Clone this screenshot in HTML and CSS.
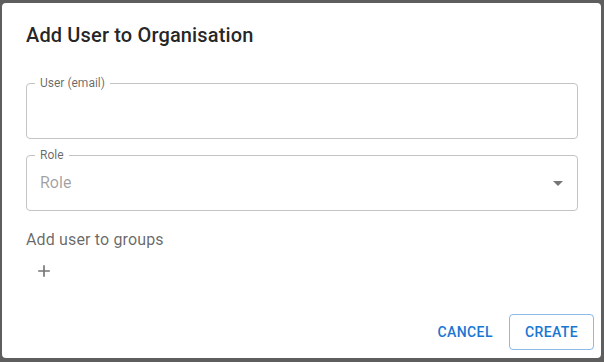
FILE: index.html
```html
<!DOCTYPE html>
<html lang="en">
<head>
  <meta charset="UTF-8">
  <title>Add User to Organisation</title>
  <link rel="stylesheet" href="styles.css">
</head>
<body>
  <div class="dialog">
    <h2 class="dialog-title">Add User to Organisation</h2>
    <div class="dialog-content">
      <div class="field">
        <span class="field-label">User (email)</span>
        <input class="field-input" type="text">
      </div>
      <div class="field select">
        <span class="field-label">Role</span>
        <span class="placeholder">Role</span>
        <svg class="arrow" viewBox="0 0 24 24" width="24" height="24"><path d="M7 10l5 5 5-5z"/></svg>
      </div>
      <p class="groups-label">Add user to groups</p>
      <button class="icon-button" aria-label="add group">
        <svg viewBox="0 0 24 24" width="20" height="20"><path d="M19 13h-6v6h-2v-6H5v-2h6V5h2v6h6v2z"/></svg>
      </button>
    </div>
    <div class="dialog-actions">
      <button class="btn text">Cancel</button>
      <button class="btn outlined">Create</button>
    </div>
  </div>
</body>
</html>
```
FILE: styles.css
```css
body {
  margin: 0;
  height: 362px;
  box-sizing: border-box;
  padding: 3px 3px 4px 2px;
  background-color: #5e5e5e;
  font-family: "Roboto", "Liberation Sans", sans-serif;
}

.dialog {
  height: 355px;
  background-color: #fff;
  border-radius: 4px;
  display: flex;
  flex-direction: column;
}

.dialog-title {
  margin: 0;
  padding: 16px 24px;
  font-size: 20px;
  line-height: 32px;
  font-weight: 500;
  letter-spacing: 0.15px;
  color: rgba(0, 0, 0, 0.87);
}

.dialog-content {
  padding: 0 23px 0 24px;
  display: flex;
  flex-direction: column;
}

.field {
  position: relative;
  height: 56px;
  margin-top: 16px;
  box-sizing: border-box;
  border: 1px solid #c4c4c4;
  border-radius: 4px;
  display: flex;
  align-items: center;
}

.field.select {
  margin-top: 16px;
}

.field-label {
  position: absolute;
  top: -8px;
  left: 8px;
  padding: 0 5px;
  background-color: #fff;
  font-size: 12px;
  line-height: 14px;
  color: rgba(0, 0, 0, 0.6);
}

.field-input {
  flex: 1;
  height: 100%;
  border: none;
  outline: none;
  background: transparent;
  padding: 0 14px;
  font: inherit;
  font-size: 16px;
}

.placeholder {
  flex: 1;
  padding-left: 13px;
  padding-bottom: 1px;
  font-size: 16px;
  color: rgba(0, 0, 0, 0.38);
}

.arrow {
  margin-right: 7px;
  fill: rgba(0, 0, 0, 0.54);
}

.groups-label {
  margin: 17px 0 0 0;
  font-size: 16px;
  line-height: 24px;
  letter-spacing: 0.15px;
  color: rgba(0, 0, 0, 0.6);
}

.icon-button {
  align-self: flex-start;
  margin: 9px 0 0 8px;
  padding: 0;
  width: 20px;
  height: 20px;
  border: none;
  background: none;
  fill: #757575;
}

.dialog-actions {
  margin-top: auto;
  padding: 8px 7px 8px 8px;
  display: flex;
  justify-content: flex-end;
  gap: 8px;
}

.btn {
  font-family: "Roboto", "Liberation Sans", sans-serif;
  font-size: 14px;
  font-weight: 500;
  letter-spacing: 0.4px;
  text-transform: uppercase;
  line-height: 24px;
  color: #1976d2;
  background: none;
  border-radius: 4px;
}

.btn.text {
  padding: 6px 8px;
  border: none;
}

.btn.outlined {
  padding: 5px 15px;
  border: 1px solid rgba(25, 118, 210, 0.5);
}
```
